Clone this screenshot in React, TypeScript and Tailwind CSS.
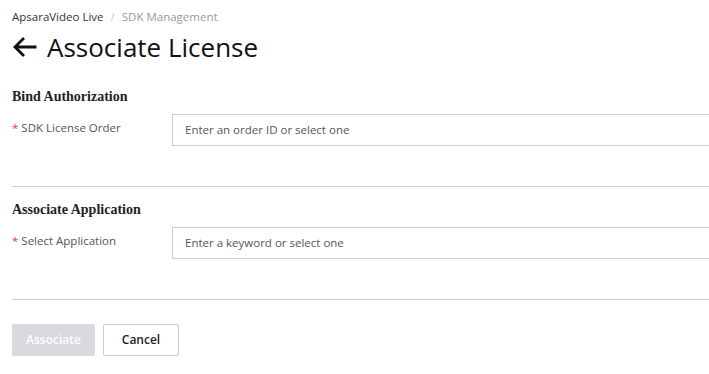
export default function App() {
  const sans = { fontFamily: '"Open Sans", "Noto Sans", sans-serif' }
  const serif = { fontFamily: '"Liberation Serif", serif' }
  return (
    <div className="w-[709px] h-[374px] overflow-hidden bg-white text-[#333]" style={sans}>
      <div className="pl-3">
        <div className="pt-[9px] flex items-center text-[11.5px] leading-[16px]">
          <span className="text-[#333]">ApsaraVideo Live</span>
          <span className="mx-[7px] text-[#ccc]">/</span>
          <span className="text-[#999]">SDK Management</span>
        </div>
        <div className="mt-[5px] flex items-center gap-[10px] h-[34px]">
          <svg width="25" height="22" viewBox="0 0 25 22" fill="none" stroke="#111" strokeWidth="2.8">
            <path d="M24.5 11H3M12 2L3 11l9 9" />
          </svg>
          <span className="text-[26px] leading-[34px] text-[#111]">Associate License</span>
        </div>

        <div className="mt-[25px] text-[14px] font-bold text-[#222] leading-[16px]" style={serif}>Bind Authorization</div>
        <div className="mt-[9px] flex">
          <div className="w-[160px] pt-[6px] text-[11.5px] leading-[16px] text-[#555]">
            <span className="text-[#e4393c] mr-[3px]">*</span>SDK License Order
          </div>
          <div className="flex-1 h-[32px] border border-r-0 border-[#c8cbd0] flex items-center pl-[12px] text-[11.5px] text-[#555]">
            Enter an order ID or select one
          </div>
        </div>
        <div className="mt-[40px] border-t border-[#c8cbd0]" />

        <div className="mt-[15px] text-[14px] font-bold text-[#222] leading-[16px]" style={serif}>Associate Application</div>
        <div className="mt-[9px] flex">
          <div className="w-[160px] pt-[6px] text-[11.5px] leading-[16px] text-[#555]">
            <span className="text-[#e4393c] mr-[3px]">*</span>Select Application
          </div>
          <div className="flex-1 h-[32px] border border-r-0 border-[#c8cbd0] flex items-center pl-[12px] text-[11.5px] text-[#555]">
            Enter a keyword or select one
          </div>
        </div>
        <div className="mt-[40px] border-t border-[#c8cbd0]" />

        <div className="mt-[24px] flex gap-[8px]">
          <button className="w-[83px] h-[32px] rounded-[2px] bg-[#d7d9dc] text-white text-[12px] font-semibold">Associate</button>
          <button className="w-[76px] h-[32px] rounded-[2px] border border-[#c8cbd0] bg-white text-[#222] text-[12px] font-semibold">Cancel</button>
        </div>
      </div>
    </div>
  )
}
